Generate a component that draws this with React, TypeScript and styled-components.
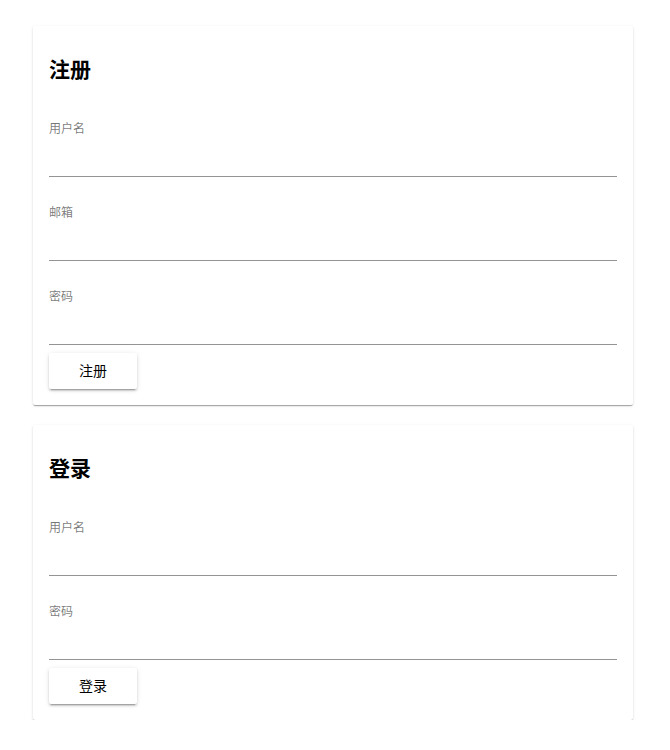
import React from 'react';
import styled, { createGlobalStyle } from 'styled-components';

interface Form {
    title: string;
    fields: string[];
    action: string;
}

const forms: Form[] = [
    { title: '注册', fields: ['用户名', '邮箱', '密码'], action: '注册' },
    { title: '登录', fields: ['用户名', '密码'], action: '登录' },
];

const App: React.FC = () => {
    return (
        <>
            <GlobalStyle />
            <Page>
                {forms.map((form, i) => (
                    <Card key={i}>
                        <Heading>{form.title}</Heading>
                        {form.fields.map((field, j) => (
                            <Field key={j}>
                                <Label>{field}</Label>
                                <Input type={field === '密码' ? 'password' : 'text'} />
                            </Field>
                        ))}
                        <Button>{form.action}</Button>
                    </Card>
                ))}
            </Page>
        </>
    );
};

const GlobalStyle = createGlobalStyle`
    body {
        margin: 0;
        background: #ffffff;
        font-family: Roboto, "Noto Sans CJK SC", sans-serif;
    }
`;

const Page = styled.div`
    display: flex;
    flex-direction: column;
    gap: 20px;
    padding: 26px 0 0 33px;
`;

const Card = styled.div`
    width: 600px;
    box-sizing: border-box;
    padding: 0 16px 16px;
    background: #fff;
    border-radius: 2px;
    box-shadow: 0 2px 1px -1px rgba(0, 0, 0, 0.2), 0 1px 1px 0 rgba(0, 0, 0, 0.14), 0 1px 3px 0 rgba(0, 0, 0, 0.12);
    display: flex;
    flex-direction: column;
    align-items: flex-start;
`;

const Heading = styled.h2`
    margin: 28px 0 7px;
    font-size: 21px;
    line-height: 32px;
    font-weight: 700;
    color: #000;
`;

const Field = styled.div`
    width: 100%;
    padding-top: 28px;
    display: flex;
    flex-direction: column;
`;

const Label = styled.label`
    font-size: 12px;
    line-height: 16px;
    color: rgba(0, 0, 0, 0.54);
`;

const Input = styled.input`
    height: 40px;
    box-sizing: border-box;
    border: none;
    border-bottom: 1px solid rgba(0, 0, 0, 0.42);
    outline: none;
    padding: 0;
    font-size: 16px;
    background: transparent;
`;

const Button = styled.button`
    margin-top: 8px;
    width: 88px;
    height: 36px;
    padding: 0 0 3px;
    border: none;
    border-radius: 2px;
    background: #fff;
    color: #000;
    font-size: 14px;
    font-family: Roboto, "Noto Sans CJK SC", sans-serif;
    cursor: pointer;
    box-shadow: 0 3px 1px -2px rgba(0, 0, 0, 0.2), 0 2px 2px 0 rgba(0, 0, 0, 0.14), 0 1px 5px 0 rgba(0, 0, 0, 0.12);
`;

export default App;
